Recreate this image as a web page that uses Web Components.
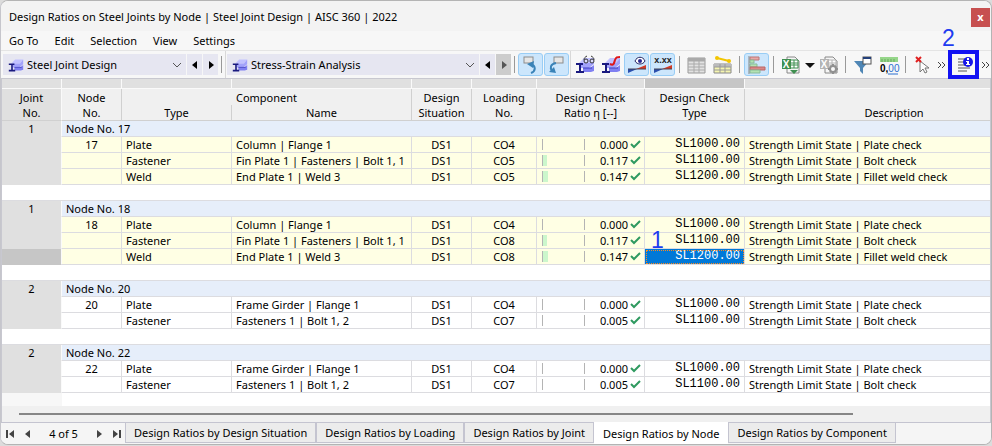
<!DOCTYPE html>
<html lang="en">
<head>
<meta charset="utf-8">
<meta name="viewport" content="width=device-width, initial-scale=1">
<title>Design Ratios on Steel Joints by Node</title>
<style>
  body {
    margin: 0;
    background: #dcdcdc;
    color: #000;
    font-family: "Noto Sans", "Open Sans", sans-serif;
    font-size: 11px;
  }
</style>
</head>
<body>
<result-window heading="Design Ratios on Steel Joints by Node | Steel Joint Design | AISC 360 | 2022">
  <menu-bar slot="menu" items="Go To,Edit,Selection,View,Settings"></menu-bar>
  <tool-bar slot="tools">
    <combo-box label="Design add-on" value="Steel Joint Design"></combo-box>
    <tool-sep tight></tool-sep>
    <tool-sep split></tool-sep>
    <combo-box wide last label="Analysis type" value="Stress-Strain Analysis"></combo-box>
    <tool-sep tight></tool-sep>
    <tool-button icon="undoSelect" label="Select in graphic" active></tool-button>
    <tool-button icon="redoSelect" label="Select in table" active></tool-button>
    <tool-sep split></tool-sep>
    <tool-button icon="beamView" label="Show members"></tool-button>
    <tool-button icon="beamCurve" label="Show diagrams"></tool-button>
    <tool-button icon="eye" label="Show results" active></tool-button>
    <tool-button icon="values" label="Show values" active></tool-button>
    <tool-sep></tool-sep>
    <tool-button icon="grid" label="Table"></tool-button>
    <tool-button icon="gridLine" label="Result table"></tool-button>
    <tool-sep></tool-sep>
    <tool-button icon="bars" label="Color bars" active></tool-button>
    <tool-sep></tool-sep>
    <tool-button icon="excel" label="Export"></tool-button>
    <tool-button icon="caret" label="Export options" narrow></tool-button>
    <tool-button icon="excelGear" label="Export settings"></tool-button>
    <tool-sep></tool-sep>
    <tool-button icon="filter" label="Filter"></tool-button>
    <tool-button icon="decimals" label="Decimal places"></tool-button>
    <tool-sep></tool-sep>
    <tool-button icon="cursor" label="Deselect"></tool-button>
    <tool-button icon="more" label="More" narrow></tool-button>
    <tool-button icon="info" label="Design check details" mark="2"></tool-button>
    <tool-button icon="more" label="More details" narrow></tool-button>
  </tool-bar>
  <result-table></result-table>
  <sheet-tabs slot="tabs" position="4 of 5" current="3"
    items="Design Ratios by Design Situation,Design Ratios by Loading,Design Ratios by Joint,Design Ratios by Node,Design Ratios by Component"></sheet-tabs>
</result-window>

<script>
// Steel member symbol, shared by several icons
const BEAM = `
  <path d="M4 8 9 3h10l-4 5z" fill="#c2c2ff"/>
  <path d="M6 8h9l4-5v6l-5 4H6z" fill="#a2a2fb"/>
  <path d="M8 13h7l4-3v6l-3 1H8z" fill="#8080f2"/>
  <path d="M8 13h9" stroke="#3c3cc0"/>
  <path d="M1 9h7M1 17h8" stroke="#1a1a80" stroke-width="2"/>
  <path d="M5 9v8" stroke="#1a1a80" stroke-width="2"/>`

const EXCEL = color => `
  <path d="M6 2h8l4 4v12H6z" fill="#f6f6f6" stroke="#888"/>
  <path d="M9 5h8v8H9z" fill="#fff" stroke="${color}"/>
  <path d="M9 8h8M9 10h8M13 5v8" stroke="${color}"/>
  <path d="M1 4h9v10H1z" fill="${color}"/>
  <text x="5" y="13" text-anchor="middle" font-size="10" font-weight="700" fill="#fff">X</text>`

const ICONS = {
  beam: BEAM,
  undoSelect: `
    <rect x="3" y="2" width="9" height="6" fill="#e6e6e6" stroke="#8c8c8c"/>
    <path d="M10 18c5-2 5-7 0-9" fill="none" stroke="#3a83b8" stroke-width="2"/>
    <path d="m6 9 7-3-1 7z" fill="#3a83b8"/>`,
  redoSelect: `
    <rect x="7" y="2" width="9" height="6" fill="#e6e6e6" stroke="#8c8c8c"/>
    <path d="M9 8c-6 1-6 5-4 8" fill="none" stroke="#3a83b8" stroke-width="2"/>
    <path d="m9 18-7-1 5-5z" fill="#3a83b8"/>`,
  beamView: BEAM + `
    <path d="M12 1c-2 1-3 2-3 4M16 1c2 1 3 2 3 4" stroke="#333" fill="none"/>
    <circle cx="11" cy="6" r="2" fill="#ddf" stroke="#333"/><circle cx="17" cy="6" r="2" fill="#ddf" stroke="#333"/>`,
  beamCurve: BEAM + `<path d="M9 9c4 2 4-1 5-4s2-3 5-3" stroke="#e01818" stroke-width="2" fill="none"/>`,
  eye: `
    <path d="M1 18v-4h9z" fill="#2a4fae"/><path d="m9 14 10-4v4z" fill="#d23a25"/>
    <path d="M1 14h18" stroke="#445"/>
    <path d="M8 6c2-5 8-5 10 0-2 4-8 4-10 0z" fill="#fff" stroke="#23235f"/>
    <circle cx="13" cy="6" r="2" fill="#2a2a90"/>`,
  values: `
    <path d="M1 18v-4h9z" fill="#2a4fae"/><path d="m9 14 10-4v4z" fill="#d23a25"/>
    <path d="M1 14h18" stroke="#445"/>
    <text x="10" y="8" text-anchor="middle" font-size="9" font-weight="700" fill="#222">x.xx</text>`,
  grid: `
    <path d="M1 3h17v15H1z" fill="#e2e2e2" stroke="#999"/><path d="M1 3h17v3H1z" fill="#aaa"/>
    <path d="M1 6h17M1 9h17M1 12h17M1 15h17M7 3v15M12 3v15" stroke="#aaa"/>`,
  gridLine: `
    <path d="M1 9h17v9H1z" fill="#f5f5b0" stroke="#888"/><path d="M1 9h17v3H1z" fill="#bbb"/>
    <path d="M1 12h17M1 15h17M7 9v9M12 9v9" stroke="#999"/>
    <path d="m4 3 12 3" stroke="#f2c500" stroke-width="2"/>
    <circle cx="4" cy="3" r="2" fill="#f2c500"/><circle cx="16" cy="6" r="2" fill="#f2c500"/>`,
  bars: `
    <path d="M3 2h9v3H3z" fill="#e8a8a8" stroke="#b77"/><path d="M3 5h4v3H3z" fill="#b3e2b3" stroke="#8b9"/>
    <path d="M3 9h7v3H3z" fill="#b3e2b3" stroke="#8b9"/><path d="M3 12h15v3H3z" fill="#d98888" stroke="#b66"/>
    <path d="M3 15h10v3H3z" fill="#b3e2b3" stroke="#8b9"/><path d="M2 1v18" stroke="#888"/>`,
  excel: EXCEL('#3f8f50') + `<path d="M9 15h8l-4 4z" fill="#3f8f50"/>`,
  excelGear: EXCEL('#b4b4b4') + `
    <path d="M14 9v10m-5-5h10m-8-3 6 6m0-6-6 6" stroke="#909090" stroke-width="2"/>
    <circle cx="14" cy="14" r="3" fill="#f8f8f8" stroke="#909090" stroke-width="2"/>`,
  caret: `<path d="M5 8h10l-5 5z" fill="#111"/>`,
  filter: `
    <path d="M1 6h15l-6 7v6l-3-3v-3z" fill="#4f86b5"/>
    <rect x="10" y="2" width="8" height="7" fill="#fff" stroke="#555"/><path d="M10 2h8v2h-8z" fill="#24407a"/>`,
  decimals: `
    <path d="M1 2h18v5H1z" fill="#96d68a"/><path d="M3 4v3M6 4v3M9 4v3M12 4v3M15 4v3" stroke="#66a95c"/>
    <text x="1" y="17" font-size="10" font-weight="700" font-family="Liberation Sans">0,<tspan font-weight="400" fill="#2a6fd0">00</tspan></text>
    <path d="M9 19h10" stroke="#2a6fd0"/>`,
  cursor: `
    <path d="M7 6v11l3-3 2 4 2-1-2-4h4z" fill="#fff" stroke="#777"/>
    <path d="m3 2 5 5m0-5L3 7" stroke="#e02020" stroke-width="2"/>`,
  more: `<path d="m6 7 3 3-3 3m4-6 3 3-3 3" fill="none" stroke="#444"/>`,
  info: `
    <path d="M4 4h8M4 7h8M4 10h8M4 13h12M4 16h9" stroke="#555"/>
    <circle cx="14" cy="7" r="5" fill="#1616e8"/>
    <path d="M13 3h2v2h-2zM12 6h3v3h1v1h-4V9h1V7h-1z" fill="#fff"/>`
}

const svg = name => `<svg viewBox="0 0 20 20" aria-hidden="true">${ICONS[name]}</svg>`

/**
 * The window frame with caption, menu, tools, content and tabs.
 */
customElements.define('result-window', class extends HTMLElement {
  connectedCallback () {
    this.attachShadow({ mode: 'open' }).innerHTML = `
<style>
:host {
  display: flex;
  flex-direction: column;
  margin-bottom: 1px;
  border: 1px solid #b4b4b4;
  border-left-color: #c6c6cc;
  border-radius: 8px;
  background: #f7f7f7;
  overflow: hidden;
}
header {
  display: flex;
  align-items: center;
  justify-content: space-between;
  height: 30px;
  padding-left: 8px;
  background: #f3f3f3;
}
h1 {
  margin: 0;
  font-size: 11px;
  font-weight: 400;
}
button {
  width: 19px;
  height: 19px;
  margin: 3px 1px 0 0;
  padding: 0 0 2px;
  border: 0;
  background: #c75050;
  color: #fff;
  font: 700 11px/15px "Noto Sans", sans-serif;
}
main {
  border: solid #c8c8d0;
  border-width: 1px 1px 0;
}
</style>
<header><h1>${this.getAttribute('heading')}</h1><button aria-label="Close">x</button></header>
<slot name="menu"></slot>
<slot name="tools"></slot>
<main><slot></slot></main>
<slot name="tabs"></slot>`
  }
})

/**
 * Menu line below the caption.
 */
customElements.define('menu-bar', class extends HTMLElement {
  connectedCallback () {
    const items = this.getAttribute('items').split(',')
    this.attachShadow({ mode: 'open' }).innerHTML = `
<style>
:host {
  display: block;
  border-bottom: 1px solid #e4e4e4;
}
nav {
  display: flex;
  gap: 16px;
  padding-left: 8px;
}
button {
  height: 19px;
  padding: 0;
  border: 0;
  background: none;
  color: inherit;
  font: inherit;
}
</style>
<nav>${items.map(item => `<button>${item}</button>`).join('')}</nav>`
  }
})

customElements.define('tool-bar', class extends HTMLElement {
  connectedCallback () {
    this.attachShadow({ mode: 'open' }).innerHTML = `
<style>
:host {
  display: flex;
  align-items: center;
  gap: 1px;
  height: 27px;
  padding-left: 2px;
}
</style>
<slot></slot>`
  }
})

customElements.define('tool-sep', class extends HTMLElement {
  connectedCallback () {
    this.attachShadow({ mode: 'open' }).innerHTML = `
<style>
:host {
  display: block;
  flex: none;
  width: 1px;
  height: 17px;
  margin: 0 3px;
  background: #999;
}
:host([tight]) {
  margin: 0 2px;
}
:host([split]) {
  height: 27px;
  margin: 0;
  background: #d8d8d8;
}
</style>`
  }
})

/**
 * Drop-down with an icon and the previous / next buttons.
 */
customElements.define('combo-box', class extends HTMLElement {
  connectedCallback () {
    this.attachShadow({ mode: 'open' }).innerHTML = `
<style>
:host {
  display: flex;
  flex: 0 1 215px;
  gap: 1px;
  height: 21px;
}
:host([wide]) {
  flex-basis: 284px;
}
label {
  display: flex;
  flex: 1;
  align-items: center;
  min-width: 0;
  padding: 0 3px 0 5px;
  background: #e6e6f1;
}
svg {
  flex: none;
  width: 16px;
  height: 16px;
}
select {
  flex: 1;
  min-width: 0;
  height: 21px;
  padding: 0 0 0 3px;
  border: 0;
  appearance: none;
  background: none;
  color: inherit;
  font: inherit;
}
.arrow {
  width: 12px;
}
button {
  width: 15px;
  padding: 0;
  border: 0;
  background: #e6e6f1;
}
button svg {
  display: block;
  width: 15px;
}
:host([last]) button:last-child {
  background: #ccc;
  color: #555;
}
</style>
<label>${svg('beam')}
  <select aria-label="${this.getAttribute('label')}"><option>${this.getAttribute('value')}</option></select>
  <svg class="arrow" viewBox="0 0 12 12" aria-hidden="true"><path d="m2 4 4 4 4-4" fill="none" stroke="#555"/></svg>
</label>
<button aria-label="Previous"><svg viewBox="0 0 15 16"><path d="M10 4v8L5 8z" fill="currentColor"/></svg></button>
<button aria-label="Next"><svg viewBox="0 0 15 16"><path d="M6 4v8l5-4z" fill="currentColor"/></svg></button>`
  }
})

/**
 * Icon button. The mark attribute draws a numbered frame over it.
 */
customElements.define('tool-button', class extends HTMLElement {
  connectedCallback () {
    const mark = this.getAttribute('mark')
    this.attachShadow({ mode: 'open' }).innerHTML = `
<style>
:host {
  display: block;
  position: relative;
  flex: none;
  width: 25px;
  height: 23px;
}
:host([narrow]) {
  width: 11px;
}
:host([mark]) {
  width: 31px;
}
button {
  display: flex;
  align-items: center;
  justify-content: center;
  box-sizing: border-box;
  width: 100%;
  height: 100%;
  padding: 0;
  border: 1px solid transparent;
  border-radius: 3px;
  background: none;
}
:host([active]) button {
  border-color: #99cdf5;
  background: #cce6fc;
}
svg {
  flex: none;
  width: 20px;
  height: 20px;
  overflow: visible;
}
.frame {
  position: absolute;
  inset: -3px 0;
  border: 4px solid #1212f2;
  pointer-events: none;
}
.number {
  position: absolute;
  left: -6px;
  bottom: 26px;
  color: #1f3cf0;
  font: 23px/23px "Liberation Sans", sans-serif;
}
</style>
<button aria-label="${this.getAttribute('label')}">${svg(this.getAttribute('icon'))}</button>
${mark ? `<div class="frame"></div><span class="number">${mark}</span>` : ''}`
  }
})

/**
 * Rows of the result table, grouped by node.
 */
const PLATE = ['SL1000.00', 'Strength Limit State | Plate check']
const BOLT = ['SL1100.00', 'Strength Limit State | Bolt check']
const WELD = ['SL1200.00', 'Strength Limit State | Fillet weld check']
const GROUPS = [
  { joint: 1, node: 17, rows: [
    ['Plate', 'Column | Flange 1', 'CO4', '0.000', PLATE],
    ['Fastener', 'Fin Plate 1 | Fasteners | Bolt 1, 1', 'CO5', '0.117', BOLT],
    ['Weld', 'End Plate 1 | Weld 3', 'CO5', '0.147', WELD]
  ] },
  { joint: 1, node: 18, selected: 2, rows: [
    ['Plate', 'Column | Flange 1', 'CO4', '0.000', PLATE],
    ['Fastener', 'Fin Plate 1 | Fasteners | Bolt 1, 1', 'CO8', '0.117', BOLT],
    ['Weld', 'End Plate 1 | Weld 3', 'CO8', '0.147', WELD]
  ] },
  { joint: 2, node: 20, rows: [
    ['Plate', 'Frame Girder | Flange 1', 'CO4', '0.000', PLATE],
    ['Fastener', 'Fasteners 1 | Bolt 1, 2', 'CO7', '0.005', BOLT]
  ] },
  { joint: 2, node: 22, rows: [
    ['Plate', 'Frame Girder | Flange 1', 'CO4', '0.000', PLATE],
    ['Fastener', 'Fasteners 1 | Bolt 1, 2', 'CO7', '0.005', BOLT]
  ] }
]

customElements.define('result-table', class extends HTMLElement {
  connectedCallback () {
    this.attachShadow({ mode: 'open' }).innerHTML = `
<style>
:host {
  display: block;
  background: #f0f0f0;
}
.view {
  overflow-x: auto;
  scrollbar-width: none;
}
table {
  width: 100%;
  min-width: 1041px;
  table-layout: fixed;
  border-collapse: separate;
  border-spacing: 0;
  background: #fff;
}
th, td {
  box-sizing: border-box;
  height: 16px;
  padding: 0 4px;
  border: solid #dcdce0;
  border-width: 0 1px 1px 0;
  line-height: 15px;
  font-weight: 400;
  text-align: left;
  white-space: nowrap;
}
tr > :last-child {
  border-right: 0;
}
thead th {
  padding: 0 2px;
  border-color: #d0d0d0;
  background: #f0f0f0;
  line-height: 15px;
  text-align: center;
  vertical-align: bottom;
}
thead th.span {
  border-bottom: 0;
}
thead th.name {
  border-right: 1px solid #d0d0d0;
}
.strip td {
  height: 10px;
  background: #e0e0e0;
  border-color: #fafafa;
}
.strip td.on, th.on {
  background: #c6c6c6;
}
thead th.joint, tbody th {
  background: #e0e0e0;
  border-right-color: #fafafa;
  text-align: center;
}
tbody th {
  border-bottom-color: #e0e0e0;
}
tbody th.on {
  background: #c6c6c6;
  border-bottom-color: #c6c6c6;
}
.group td {
  background: #e6eefa;
}
.yellow td {
  background: #ffffe4;
}
.center {
  text-align: center;
}
.blank td {
  border-right: 0;
}
.blank:last-child td {
  height: 13px;
  border-bottom: 0;
}
.blank:last-child td:first-child {
  background: #f7f7f7;
}
td.bar {
  padding-right: 3px;
}
.ratio {
  display: flex;
  align-items: center;
  height: 15px;
  padding-left: 1px;
}
.gauge {
  width: 41px;
  height: 11px;
  border: solid #b4b4b4;
  border-width: 0 1px;
}
.gauge i {
  display: block;
  height: 11px;
  background: #ccf7cc;
}
.ratio span {
  flex: 1;
  text-align: right;
}
.ratio svg {
  width: 11px;
  height: 9px;
  margin-left: 2px;
}
td.check {
  position: relative;
  font-family: "Liberation Mono", monospace;
  font-size: 12px;
  text-align: right;
}
td.check.on {
  background: #0078d7;
  color: #fff;
  outline: 1px dotted #ff8a1c;
  outline-offset: -2px;
}
.number {
  position: absolute;
  left: 6px;
  bottom: 12px;
  color: #1f3cf0;
  font: 23px/23px "Liberation Sans", sans-serif;
}
.scroll {
  display: flex;
  align-items: center;
  height: 16px;
  padding: 0 137px 0 17px;
}
.scroll div {
  flex: 1;
  height: 2px;
  background: #868686;
}
</style>
<div class="view">
<table>
  <colgroup>
    <col style="width: 60px"><col style="width: 60px"><col style="width: 110px"><col style="width: 180px">
    <col style="width: 60px"><col style="width: 65px"><col style="width: 108px"><col style="width: 100px"><col>
  </colgroup>
  <thead>
    <tr class="strip"><td></td><td></td><td></td><td></td><td></td><td></td><td></td><td class="on"></td><td></td></tr>
    <tr>
      <th class="joint" rowspan="2">Joint<br>No.</th>
      <th rowspan="2">Node<br>No.</th>
      <th class="span" colspan="2">Component</th>
      <th rowspan="2">Design<br>Situation</th>
      <th rowspan="2">Loading<br>No.</th>
      <th rowspan="2">Design Check<br>Ratio η [--]</th>
      <th rowspan="2">Design Check<br>Type</th>
      <th rowspan="2">Description</th>
    </tr>
    <tr><th>Type</th><th class="name">Name</th></tr>
  </thead>
  <tbody>${GROUPS.map(group => this._renderGroup(group)).join('')}</tbody>
</table>
</div>
<div class="scroll"><div></div></div>`
  }

  _renderGroup (group) {
    const rows = group.rows.map((row, i) => this._renderRow(group, row, i)).join('')
    return `
<tr class="group"><th>${group.joint}</th><td colspan="8">Node No. ${group.node}</td></tr>
${rows}
<tr class="blank"><td></td><td colspan="8"></td></tr>`
  }

  _renderRow (group, [type, name, loading, ratio, check], i) {
    const on = group.selected === i ? 'on' : ''
    const mark = on ? '<span class="number">1</span>' : ''
    return `
<tr class="${group.joint === 1 ? 'yellow' : ''}">
  <th class="${on}"></th>
  <td class="center">${i === 0 ? group.node : ''}</td>
  <td>${type}</td>
  <td>${name}</td>
  <td class="center">DS1</td>
  <td class="center">${loading}</td>
  <td class="bar"><div class="ratio">
    <div class="gauge"><i style="width: ${Math.floor(ratio * 40)}px"></i></div>
    <span>${ratio}</span>
    <svg viewBox="0 0 11 9"><path d="m1 4 3 3 6-6" fill="none" stroke="#2f9a60" stroke-width="2"/></svg>
  </div></td>
  <td class="check ${on}">${check[0]}${mark}</td>
  <td>${check[1]}</td>
</tr>`
  }
})

/**
 * Sheet tabs with the record navigator on the left.
 */
customElements.define('sheet-tabs', class extends HTMLElement {
  connectedCallback () {
    const current = Number(this.getAttribute('current'))
    const tabs = this.getAttribute('items').split(',').map((item, i) =>
      `<button class="tab" role="tab" aria-selected="${i === current}">${item}</button>`)
    const nav = (label, d) =>
      `<button class="nav" aria-label="${label}"><svg viewBox="0 0 10 10"><path d="${d}" fill="#444"/></svg></button>`
    this.attachShadow({ mode: 'open' }).innerHTML = `
<style>
:host {
  display: flex;
  height: 22px;
  background: #f5f5f5;
}
.pager {
  display: flex;
  align-items: center;
  justify-content: space-between;
  width: 117px;
  padding: 0 3px 0 4px;
  border-top: 1px solid #c4c4d0;
}
button {
  padding: 0;
  border: 0;
  background: none;
  color: inherit;
  font: inherit;
}
.nav {
  width: 10px;
  height: 10px;
}
.nav svg {
  display: block;
}
.pager span {
  width: 50px;
  text-align: center;
}
.tabs {
  display: flex;
  flex: 1;
  align-items: flex-start;
}
.tab {
  height: 21px;
  padding: 0 8px;
  border: 1px solid #c4c4d0;
  background: #ececec;
  white-space: nowrap;
}
.tab[aria-selected=true] {
  height: 22px;
  border-color: #fff;
  background: #fff;
}
.rest {
  flex: 1;
  border-top: 1px solid #c4c4d0;
}
</style>
<div class="pager">
  ${nav('First', 'M1 1h2v8H1zM9 1v8L4 5z')}
  ${nav('Previous', 'M8 1v8L3 5z')}
  <span>${this.getAttribute('position')}</span>
  ${nav('Next', 'M2 1v8l5-4z')}
  ${nav('Last', 'M1 1v8l5-4zM7 1h2v8H7z')}
</div>
<div class="tabs" role="tablist">${tabs.join('')}<div class="rest"></div></div>`
  }
})
</script>
</body>
</html>
